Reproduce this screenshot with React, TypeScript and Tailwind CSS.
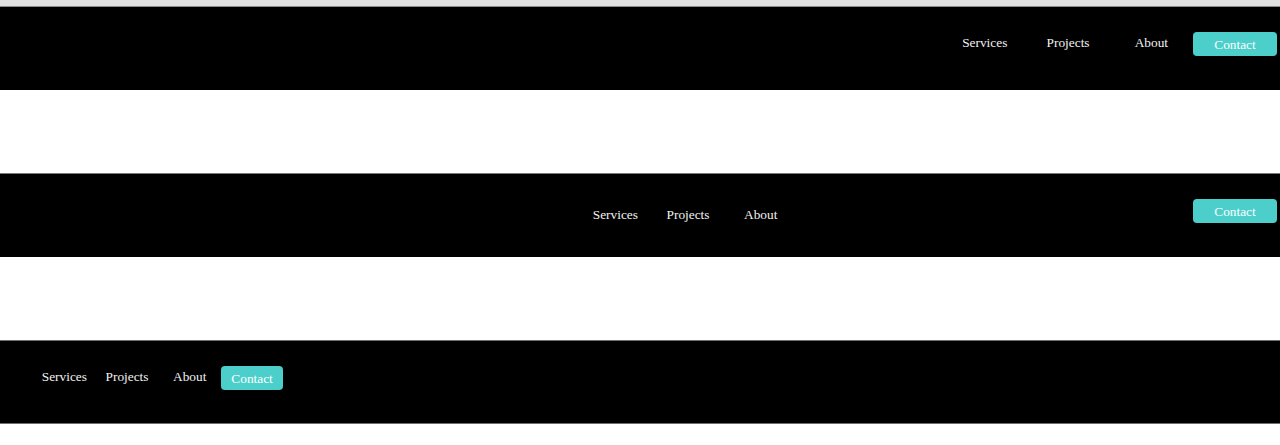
const links = ["Services", "Projects", "About"];

function NavLinks({ width, offset }: { width: string; offset: string }) {
  return (
    <ul className={`flex ${offset}`}>
      {links.map((l) => (
        <li key={l} className={`${width} text-center leading-[15px]`}>
          <a href="#" className="text-[#f2f2f2]">
            {l}
          </a>
        </li>
      ))}
    </ul>
  );
}

function ContactButton({ className }: { className: string }) {
  return (
    <button
      className={`flex h-[24px] items-center justify-center rounded-[4px] bg-[#4ccfcb] leading-[15px] text-white ${className}`}
    >
      Contact
    </button>
  );
}

export default function App() {
  return (
    <div
      className="min-h-[445px] bg-white text-[13.33px]"
      style={{ fontFamily: '"Liberation Serif", "Times New Roman", serif' }}
    >
      <div className="h-[6px] bg-[#e1e1e1]" />

      {/* right aligned */}
      <nav className="flex h-[84px] items-start justify-end border-t border-[#8a8a8a] bg-black pr-[3px]">
        <NavLinks width="w-[83.3px]" offset="mt-[28px]" />
        <ContactButton className="mt-[25px] w-[84px]" />
      </nav>

      <div className="h-[83px]" />

      {/* centered links */}
      <nav className="flex h-[84px] items-start border-t border-[#7a7a7a] bg-black pr-[3px]">
        <NavLinks width="w-[72.7px]" offset="ml-[579px] mt-[33px]" />
        <div className="flex-1" />
        <ContactButton className="mt-[25px] w-[84px]" />
      </nav>

      <div className="h-[83px]" />

      {/* left aligned */}
      <nav className="flex h-[84px] items-start border-t border-b border-[#6f6f6f] bg-black pl-[33px]">
        <NavLinks width="w-[62.7px]" offset="mt-[28px]" />
        <ContactButton className="mt-[25px] w-[62px]" />
      </nav>
    </div>
  );
}
